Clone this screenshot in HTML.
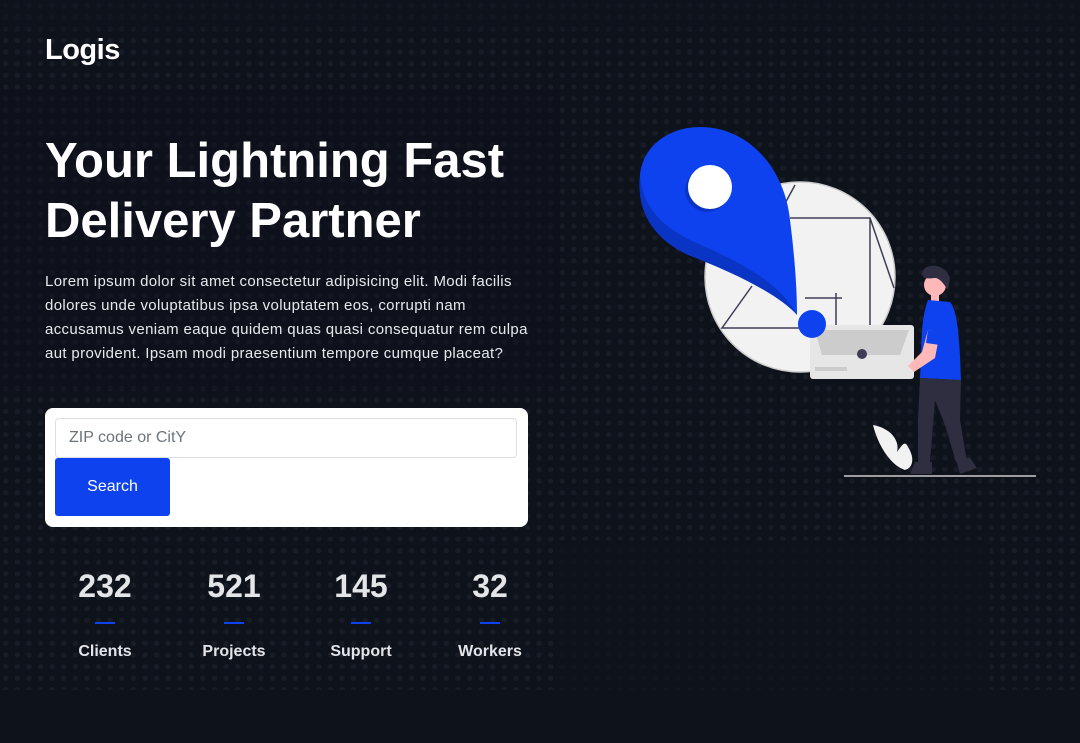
<!DOCTYPE html>
<html><head><meta charset="utf-8"><style>
*{margin:0;padding:0;box-sizing:border-box}
html,body{width:1080px;height:743px;overflow:hidden}
body{background:#0e121b;font-family:"Liberation Sans",sans-serif;color:#fff;position:relative}
.dots{position:absolute;inset:0;background-image:radial-gradient(circle,#1a1f29 2.4px,transparent 2.9px);background-size:11.6px 11.6px;opacity:.8}
.mask{position:absolute;background:#0e121b}
.logo{position:absolute;left:45px;top:34px;font-size:29px;font-weight:bold;letter-spacing:-0.5px}
h1{position:absolute;left:45px;top:131px;font-size:49px;line-height:60px;font-weight:bold;letter-spacing:0px}
p{position:absolute;left:45px;top:270px;font-size:15px;line-height:24px;color:#e6e8ec;letter-spacing:0.35px;white-space:nowrap}
.card{position:absolute;left:45px;top:408px;width:483px;height:119px;background:#fff;border-radius:8px}
.inp{position:absolute;left:10px;top:10px;width:462px;height:40px;border:1px solid #dcdfe3;border-radius:4px;color:#6c737c;font-size:16px;padding:10px 13px}
.btn{position:absolute;left:10px;top:50px;width:115px;height:58px;background:#0d42ee;border-radius:3px;color:#fff;font-size:16px;text-align:center;line-height:58px}
.st{position:absolute;top:566px;text-align:center;width:80px}
.st b{display:block;font-size:32px;color:#e3e5e8;line-height:40px}
.st i{display:block;width:20px;height:2px;background:#0d42ee;margin:16px auto 0}
.st span{display:block;font-size:16px;font-weight:bold;color:#e3e5e8;margin-top:19px}
</style></head><body>
<div class="dots"></div>
<div class="mask" style="left:0;top:0;width:1080px;height:30px;opacity:.5"></div>
<div class="mask" style="left:0;top:690px;width:1080px;height:53px"></div>
<div class="mask" style="left:560px;top:540px;width:430px;height:150px;opacity:.7"></div>
<div class="mask" style="left:0;top:90px;width:560px;height:300px;opacity:.4"></div>
<div class="logo">Logis</div>
<h1>Your Lightning Fast<br>Delivery Partner</h1>
<p>Lorem ipsum dolor sit amet consectetur adipisicing elit. Modi facilis<br>dolores unde voluptatibus ipsa voluptatem eos, corrupti nam<br>accusamus veniam eaque quidem quas quasi consequatur rem culpa<br>aut provident. Ipsam modi praesentium tempore cumque placeat?</p>
<div class="card"><div class="inp">ZIP code or CitY</div><div class="btn">Search</div></div>
<div class="st" style="left:65px"><b>232</b><i></i><span>Clients</span></div>
<div class="st" style="left:194px"><b>521</b><i></i><span>Projects</span></div>
<div class="st" style="left:321px"><b>145</b><i></i><span>Support</span></div>
<div class="st" style="left:450px"><b>32</b><i></i><span>Workers</span></div>
<svg style="position:absolute;left:0;top:0" width="1080" height="743">
<circle cx="800" cy="277" r="95" fill="#f2f2f2" stroke="#ccc" stroke-width="1.5"/>
<g stroke="#3f3d56" stroke-width="1.5" fill="none">
<path d="M795 185 L775 222 M790 218 L870 218 L870 340 M870 218 L894 288 M752 286 L722 328 L800 328 M805 298 L842 298 M836 293 L836 330"/>
</g>
<path d="M700 127 C750 127 785 170 790 220 C795 260 797 290 797 315 C780 290 740 270 690 245 C650 225 638 200 640 175 C643 145 670 127 700 127Z" fill="#0d42ee"/>
<path d="M640 175 C642 205 660 225 690 240 C740 262 780 282 797 315 C780 296 740 275 688 255 C652 238 636 210 640 175Z" fill="#0a35c4"/>
<circle cx="707" cy="190" r="22" fill="#0a35c4"/>
<circle cx="710" cy="187" r="22" fill="#fff"/>
<rect x="810" y="325" width="104" height="54" rx="3" fill="#e6e6e6"/>
<path d="M815 330 L909 330 L900 355 L822 355Z" fill="#ccc"/>
<circle cx="862" cy="354" r="5" fill="#3f3d56"/>
<rect x="815" y="367" width="32" height="4" fill="#ccc"/>
<circle cx="812" cy="324" r="14" fill="#0d42ee"/>
<path d="M873 425 C890 428 900 440 897 452 C902 445 905 440 908 447 C915 458 913 468 905 470 C890 465 878 445 873 425Z" fill="#f2f2f2"/>
<line x1="844" y1="476" x2="1036" y2="476" stroke="#ccc" stroke-width="1.5"/>
<circle cx="935" cy="285" r="11" fill="#ffb8b8"/>
<path d="M922 275 C922 262 945 262 950 278 L948 290 C944 285 942 280 936 278 C930 278 925 280 922 275Z" fill="#2f2e41"/>
<rect x="931" y="293" width="8" height="10" fill="#ffb8b8"/>
<path d="M928 300 L950 302 C958 310 960 345 961 380 L920 378 C922 350 920 320 928 300Z" fill="#0d42ee"/>
<path d="M928 330 L940 332 L935 358 L914 372 L908 366 L922 352Z" fill="#ffb8b8"/>
<path d="M928 330 L942 332 L940 345 L926 343Z" fill="#0d42ee"/>
<path d="M920 378 L961 380 L960 420 L967 462 L956 462 L945 425 L935 400 L930 462 L918 462 L918 420Z" fill="#2f2e41"/>
<path d="M915 462 L932 462 L932 474 L910 474Z M956 460 L970 458 L977 468 L960 474Z" fill="#2f2e41"/>
</svg>
</body></html>
